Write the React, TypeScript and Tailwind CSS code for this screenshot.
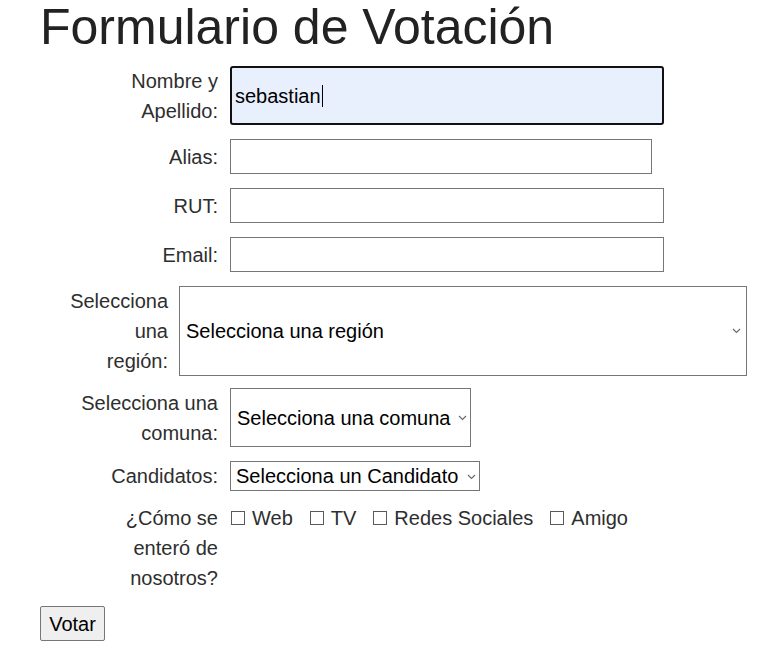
import React from "react";

function Chevron() {
  return (
    <svg width="9" height="6" viewBox="0 0 9 6" className="pointer-events-none">
      <path d="M1 1 L4.5 4.5 L8 1" fill="none" stroke="#6b6b6b" strokeWidth="1.2" />
    </svg>
  );
}

function Box({ label }: { label: string }) {
  return (
    <label className="flex items-center">
      <span className="inline-block w-[14px] h-[14px] border-[1.5px] border-[#5a5a5a] bg-white" />
      <span className="ml-[7px]">{label}</span>
    </label>
  );
}

export default function App() {
  return (
    <div
      className="min-h-[660px] overflow-hidden bg-white px-[40px] text-[20px] text-[#2e2e2e]"
      style={{ fontFamily: '"Liberation Sans", Arial, sans-serif' }}
    >
      <h1 className="m-0 pt-[1px] text-[50px] leading-[52px] font-normal text-[#222]">
        Formulario de Votación
      </h1>
      <form className="flex flex-col">
        {/* Nombre */}
        <div className="mt-[13px] flex items-start">
          <div className="w-[178px] shrink-0 text-right leading-[30px]">
            Nombre y
            <br />
            Apellido:
          </div>
          <div className="ml-[12px] flex h-[59px] w-[434px] shrink-0 items-center rounded-[3px] border-2 border-[#111] bg-[#e8f0fe] pl-[3px] text-black">
            <span>sebastian</span>
            <span className="ml-[1px] inline-block h-[22px] w-[1px] bg-black" />
          </div>
        </div>
        {/* Alias */}
        <div className="mt-[13px] flex items-center">
          <div className="w-[178px] shrink-0 text-right leading-[30px]">Alias:</div>
          <input
            type="text"
            className="ml-[12px] h-[35px] w-[422px] shrink-0 border border-[#767676] bg-white px-[3px] text-black outline-none"
          />
        </div>
        {/* RUT */}
        <div className="mt-[14px] flex items-center">
          <div className="w-[178px] shrink-0 text-right leading-[30px]">RUT:</div>
          <input
            type="text"
            className="ml-[12px] h-[35px] w-[434px] shrink-0 border border-[#767676] bg-white px-[3px] text-black outline-none"
          />
        </div>
        {/* Email */}
        <div className="mt-[14px] flex items-center">
          <div className="w-[178px] shrink-0 text-right leading-[30px]">Email:</div>
          <input
            type="email"
            className="ml-[12px] h-[35px] w-[434px] shrink-0 border border-[#767676] bg-white px-[3px] text-black outline-none"
          />
        </div>
        {/* Region */}
        <div className="mt-[14px] flex items-start">
          <div className="w-[128px] shrink-0 text-right leading-[30px]">
            Selecciona
            <br />
            una
            <br />
            región:
          </div>
          <div className="relative ml-[11px] h-[90px] w-[568px] shrink-0">
            <select className="h-full w-full appearance-none border border-[#767676] bg-white pl-[6px] text-black outline-none">
              <option>Selecciona una región</option>
            </select>
            <div className="absolute right-[6px] top-[42px]">
              <Chevron />
            </div>
          </div>
        </div>
        {/* Comuna */}
        <div className="mt-[12px] flex items-start">
          <div className="w-[178px] shrink-0 text-right leading-[30px]">
            Selecciona una
            <br />
            comuna:
          </div>
          <div className="relative ml-[12px] h-[59px] w-[241px] shrink-0">
            <select className="h-full w-full appearance-none border border-[#767676] bg-white pl-[6px] text-black outline-none">
              <option>Selecciona una comuna</option>
            </select>
            <div className="absolute right-[4px] top-[27px]">
              <Chevron />
            </div>
          </div>
        </div>
        {/* Candidatos */}
        <div className="mt-[13px] flex items-center">
          <div className="w-[178px] shrink-0 text-right leading-[30px]">Candidatos:</div>
          <div className="relative ml-[12px] h-[30px] w-[250px] shrink-0">
            <select className="h-full w-full appearance-none border border-[#767676] bg-white pl-[5px] leading-[28px] text-black outline-none">
              <option>Selecciona un Candidato</option>
            </select>
            <div className="absolute right-[4px] top-[13px]">
              <Chevron />
            </div>
          </div>
        </div>
        {/* Checkboxes */}
        <div className="mt-[12px] flex items-start">
          <div className="w-[178px] shrink-0 text-right leading-[30px]">
            ¿Cómo se
            <br />
            enteró de
            <br />
            nosotros?
          </div>
          <div className="ml-[13px] flex h-[30px] items-center gap-[17px] leading-[30px]">
            <Box label="Web" />
            <Box label="TV" />
            <Box label="Redes Sociales" />
            <Box label="Amigo" />
          </div>
        </div>
        <div className="mt-[13px]">
          <button
            type="button"
            className="h-[35px] w-[65px] rounded-[2px] border border-[#767676] bg-[#efefef] text-[20px] text-black"
          >
            Votar
          </button>
        </div>
      </form>
    </div>
  );
}
